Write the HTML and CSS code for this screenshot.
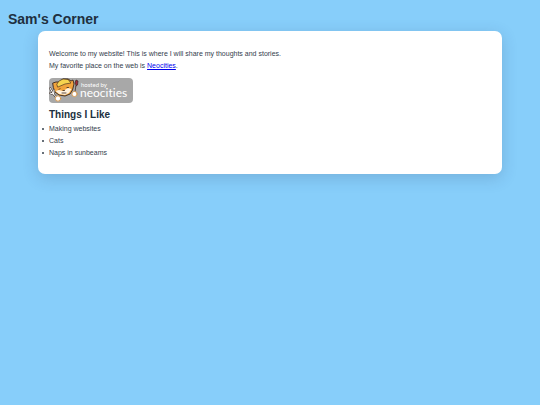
FILE: index.html
```html
<!DOCTYPE html>
<html lang="en">
<head>
<meta charset="utf-8">
<title>Sam's Corner</title>
<link rel="stylesheet" href="styles.css">
</head>
<body>
<h1>Sam's Corner</h1>
<main class="card">
  <p>Welcome to my website! This is where I will share my thoughts and stories.</p>
  <p>My favorite place on the web is <a href="#">Neocities</a>.</p>
  <a class="badge" href="#" aria-label="Hosted by Neocities">
    <svg width="84" height="25" viewBox="0 0 84 25">
      <rect width="84" height="25" rx="4" fill="#a8a8a8"/>
      <g stroke="#38251b" stroke-width=".9" stroke-linejoin="round" stroke-linecap="round">
        <path d="M4 5L7 4L10 4L14 1L19 1L22 3L24 2L25 6L23.500 12L21 16L16 18L10 17L6 14L4.500 10Z" fill="#f0a33c"/>
        <path d="M8 6L10 3L14 1L19 1.500L22 5L16 6L9 9Z" fill="#f6d34e" stroke-width=".6"/>
        <path d="M6.500 13L10 12L14 13L19 10L22.500 11L20 15L16 17L10 16Z" fill="#fff1dc" stroke="none"/>
        <path d="M10 11.500L11 10.500M18 9.500L19.500 9.500M14 12.500H15.500M13 15H17" fill="none" stroke-width=".8"/>
        <path d="M1 10L4.500 16L8 20M4.500 16L1 15M4.500 16L5 12" fill="none" stroke="#4b3f38" stroke-width="2"/>
        <path d="M1 10L4.500 16L8 20M4.500 16L1 15M4.500 16L5 12" fill="none" stroke="#fff" stroke-width="1"/>
        <circle cx="9" cy="20.500" r="2.700" fill="#fff" stroke="#d59548"/>
        <path d="M26 14L27 7L26 5L27 2L29 3L28.500 7L27 8" fill="#a12b3b" stroke-width=".7"/>
        <circle cx="25.500" cy="16" r="2.600" fill="#fff" stroke="#d59548"/>
      </g>
      <text x="32" y="9" class="badge-small">hosted by</text>
      <text x="31" y="19" class="badge-name">neocities</text>
    </svg>
  </a>
  <h2>Things I Like</h2>
  <ul>
    <li>Making websites</li>
    <li>Cats</li>
    <li>Naps in sunbeams</li>
  </ul>
</main>
</body>
</html>
```
FILE: styles.css
```css
body {
  margin: 0;
  padding: 8px 8px 40px;
  background: #87cefa;
  color: #34404d;
  font: 7px/12px "Liberation Sans", Arial, sans-serif;
}

h1, h2 {
  margin: 0;
  color: #203040;
}

h1 {
  font-size: 14px;
  line-height: 23px;
}

h2 {
  margin: 5px 0 1px;
  font-size: 10px;
  line-height: 14px;
}

p {
  margin: 0;
}

.card {
  margin: 0 30px;
  padding: 17px 11px 15px;
  background: #fff;
  border-radius: 7px;
  box-shadow: 0 4px 16px rgba(40, 60, 100, 0.2);
}

a {
  color: #0000ee;
}

.badge {
  display: block;
  width: max-content;
  margin-top: 6px;
}

.badge svg {
  display: block;
}

.badge-small,
.badge-name {
  fill: #fff;
  font-family: Lato, "Open Sans", sans-serif;
  font-variant-ligatures: none;
}

.badge-small {
  font-size: 6px;
}

.badge-name {
  font-size: 12px;
}

ul {
  margin: 0;
  padding: 0;
  list-style: none;
}

li {
  display: flex;
  align-items: center;
  height: 12px;
}

li::before {
  content: "";
  width: 2px;
  height: 2px;
  margin: 0 5px 0 -7px;
  border-radius: 50%;
  background: currentColor;
}
```
